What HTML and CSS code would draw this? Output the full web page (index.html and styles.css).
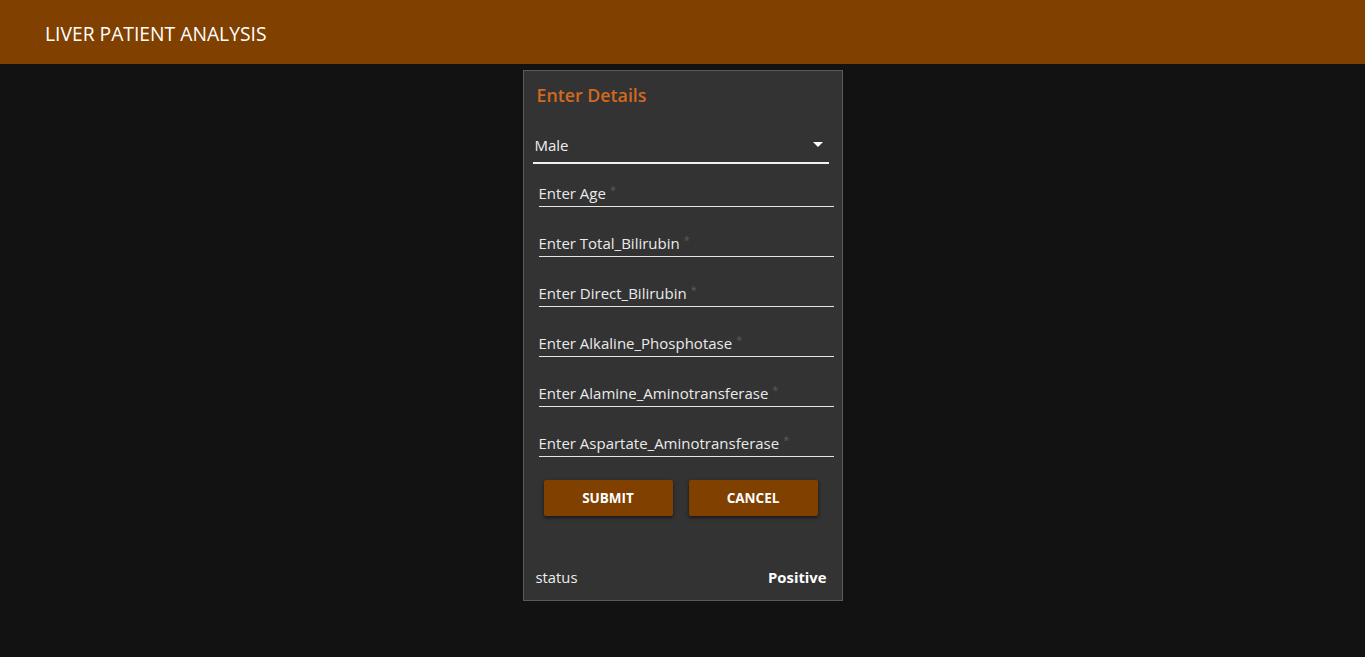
FILE: index.html
```html
<!DOCTYPE html>
<html>
<head>
<meta charset="utf-8">
<link rel="stylesheet" href="styles.css">
</head>
<body>
<header class="appbar"><span class="appbar-title">LIVER PATIENT ANALYSIS</span></header>
<main class="main">
  <section class="card">
    <h2 class="card-title">Enter Details</h2>
    <div class="select">
      <span class="select-value">Male</span>
      <svg class="select-arrow" width="10" height="5" viewBox="0 0 10 5"><path d="M0 0 L10 0 L5 5 Z" fill="#fff"/></svg>
    </div>
    <div class="fields">
      <div class="field"><span class="label">Enter Age<span class="req">*</span></span></div>
      <div class="field"><span class="label">Enter Total_Bilirubin<span class="req">*</span></span></div>
      <div class="field"><span class="label">Enter Direct_Bilirubin<span class="req">*</span></span></div>
      <div class="field"><span class="label">Enter Alkaline_Phosphotase<span class="req">*</span></span></div>
      <div class="field"><span class="label">Enter Alamine_Aminotransferase<span class="req">*</span></span></div>
      <div class="field"><span class="label">Enter Aspartate_Aminotransferase<span class="req">*</span></span></div>
    </div>
    <div class="actions">
      <button class="btn">SUBMIT</button>
      <button class="btn">CANCEL</button>
    </div>
    <div class="status">
      <span class="status-label">status</span>
      <span class="status-value">Positive</span>
    </div>
  </section>
</main>
</body>
</html>
```
FILE: styles.css
```css
* { box-sizing: border-box; }
html, body { margin: 0; padding: 0; }
body {
  background: #121212;
  font-family: "Open Sans", "Noto Sans", sans-serif;
  color: #fff;
  height: 657px;
  overflow: hidden;
}
.appbar {
  height: 64px;
  background: #804000;
  display: flex;
  align-items: center;
  padding: 3px 0 0 45px;
}
.appbar-title {
  font-size: 19.3px;
  color: #fff;
}
.main {
  display: flex;
  justify-content: center;
  padding-top: 6px;
}
.card {
  width: 320px;
  height: 531px;
  background: #333333;
  border: 1px solid #5a5a5a;
  display: flex;
  flex-direction: column;
}
.card-title {
  margin: 12px 0 0 13px;
  font-size: 17.8px;
  line-height: 24px;
  font-weight: 600;
  color: #d2691e;
}
.select {
  margin: 19px 13px 0 9px;
  height: 38px;
  padding: 7px 6px 5px 2px;
  border-bottom: 2px solid #f2f2f2;
  display: flex;
  align-items: center;
  justify-content: space-between;
}
.select-value {
  font-size: 15px;
  line-height: 24px;
  color: #eee;
}
.select-arrow { margin-top: -2px; }
.fields {
  display: flex;
  flex-direction: column;
  gap: 7px;
  margin: 0 8px 0 15px;
}
.field {
  height: 43px;
  border-bottom: 1px solid #e6e6e6;
  display: flex;
  align-items: flex-end;
  padding-bottom: 1px;
}
.label {
  font-size: 15px;
  line-height: 24px;
  color: #eaeaea;
}
.req {
  color: #5c5c5c;
  font-size: 11px;
  margin-left: 4px;
  vertical-align: 5px;
}
.actions {
  display: flex;
  gap: 16px;
  margin: 23px 0 0 20px;
}
.btn {
  width: 129px;
  height: 36px;
  border: none;
  border-radius: 2px;
  background: #804000;
  color: #fff;
  font-family: inherit;
  font-size: 13.5px;
  font-weight: 700;
  box-shadow: 0 2px 3px rgba(0,0,0,0.4), 0 1px 5px rgba(0,0,0,0.2);
}
.status {
  margin-top: auto;
  display: flex;
  justify-content: space-between;
  padding: 0 15px 11px 12px;
  font-size: 14.8px;
  line-height: 24px;
}
.status-label { color: #eee; }
.status-value { font-weight: 700; }
```
